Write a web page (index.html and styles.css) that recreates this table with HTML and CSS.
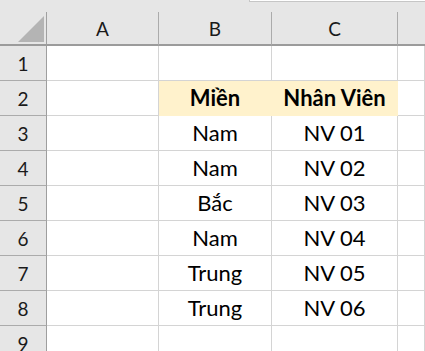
FILE: index.html
```html
<!DOCTYPE html>
<html lang="vi">
<head>
<meta charset="utf-8">
<title>Sheet</title>
<link rel="stylesheet" href="styles.css">
</head>
<body>
<div class="sheet">
  <div class="topstrip">
    <div class="topstrip-gap"></div>
    <div class="formula-edge"></div>
  </div>
  <div class="grid">
    <div class="corner"><div class="tri"></div></div>
    <div class="colhead">A</div>
    <div class="colhead">B</div>
    <div class="colhead">C</div>
    <div class="colhead last"></div>

    <div class="rowhead">1</div>
    <div class="cell"></div><div class="cell"></div><div class="cell"></div><div class="cell"></div>

    <div class="rowhead">2</div>
    <div class="cell"></div><div class="cell fill bold">Miền</div><div class="cell fill bold">Nhân Viên</div><div class="cell"></div>

    <div class="rowhead">3</div>
    <div class="cell"></div><div class="cell">Nam</div><div class="cell">NV 01</div><div class="cell"></div>

    <div class="rowhead">4</div>
    <div class="cell"></div><div class="cell">Nam</div><div class="cell">NV 02</div><div class="cell"></div>

    <div class="rowhead">5</div>
    <div class="cell"></div><div class="cell">Bắc</div><div class="cell">NV 03</div><div class="cell"></div>

    <div class="rowhead">6</div>
    <div class="cell"></div><div class="cell">Nam</div><div class="cell">NV 04</div><div class="cell"></div>

    <div class="rowhead">7</div>
    <div class="cell"></div><div class="cell">Trung</div><div class="cell">NV 05</div><div class="cell"></div>

    <div class="rowhead">8</div>
    <div class="cell"></div><div class="cell">Trung</div><div class="cell">NV 06</div><div class="cell"></div>

    <div class="rowhead">9</div>
    <div class="cell"></div><div class="cell"></div><div class="cell"></div><div class="cell"></div>
  </div>
</div>
</body>
</html>
```
FILE: styles.css
```css
html, body {
  margin: 0;
  padding: 0;
  background: #ffffff;
  overflow: hidden;
}
.sheet {
  width: 425px;
  height: 351px;
  overflow: hidden;
  font-family: Lato, "Liberation Sans", sans-serif;
  color: #000;
}
.topstrip {
  height: 12px;
  background: #e6e6e6;
  display: flex;
}
.topstrip-gap {
  width: 249px;
}
.formula-edge {
  flex: 1;
  height: 1px;
  background: #ffffff;
  border-bottom: 1px solid #c6c6c6;
  border-left: 1px solid #c6c6c6;
}
.grid {
  display: grid;
  grid-template-columns: 47px 112px 113px 126px 1fr;
  grid-template-rows: 34px repeat(9, 35px);
}
.corner {
  background: #e6e6e6;
  border-right: 1px solid #a0a0a0;
  border-bottom: 2px solid #9b9b9b;
  position: relative;
}
.tri {
  position: absolute;
  left: 18px;
  top: 4px;
  width: 26px;
  height: 26px;
  background: #b4b4b4;
  clip-path: polygon(100% 0, 100% 100%, 0 100%);
}
.colhead {
  background: #e6e6e6;
  border-right: 1px solid #ababab;
  border-bottom: 2px solid #9b9b9b;
  display: flex;
  align-items: center;
  justify-content: center;
  font-size: 19px;
  padding-top: 1px;
  color: #1a1a1a;
}
.colhead.last {
  border-right: none;
}
.rowhead {
  background: #e6e6e6;
  border-right: 1px solid #9e9e9e;
  border-bottom: 1px solid #ababab;
  display: flex;
  align-items: flex-end;
  justify-content: center;
  font-size: 19px;
  padding-bottom: 5px;
  color: #1a1a1a;
}
.cell {
  border-right: 1px solid #d4d4d4;
  border-bottom: 1px solid #d4d4d4;
  display: flex;
  align-items: flex-end;
  justify-content: center;
  font-size: 22px;
  padding-bottom: 4px;
  white-space: nowrap;
}
.fill {
  background: #fff2cc;
  border-color: #fff2cc;
}
.fill + .fill {
  border-left: none;
}
.bold {
  font-weight: 700;
}
```
